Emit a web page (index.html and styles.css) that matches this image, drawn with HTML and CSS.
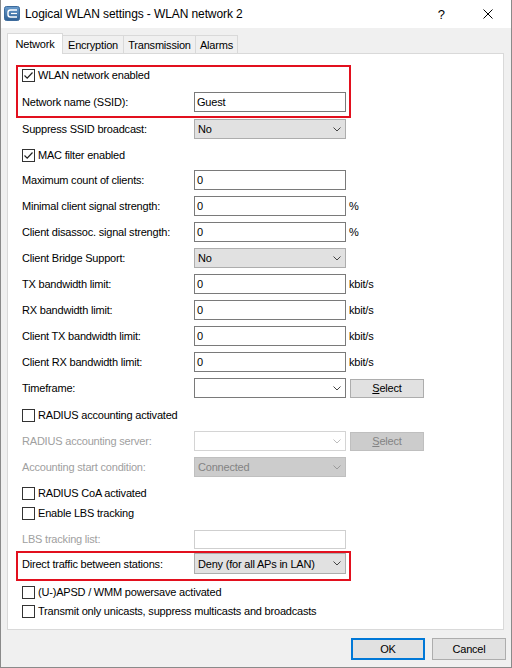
FILE: index.html
```html
<!DOCTYPE html>
<html>
<head>
<meta charset="utf-8">
<title>Logical WLAN settings</title>
<link rel="stylesheet" href="styles.css">
</head>
<body>
<div class="window">
  <div class="titlebar">
    <svg class="appicon" width="16" height="15" viewBox="0 0 16 15">
      <defs>
        <linearGradient id="ig" x1="0" y1="0" x2="0" y2="1">
          <stop offset="0" stop-color="#6a9ccd"/>
          <stop offset="1" stop-color="#2e5f93"/>
        </linearGradient>
      </defs>
      <rect x="0.5" y="0.5" width="15" height="14" rx="2" fill="url(#ig)" stroke="#3d6b9c"/>
      <path d="M13 4H6.5A2.5 2.5 0 0 0 4 6.5v2A2.5 2.5 0 0 0 6.5 11H13" fill="none" stroke="#fff" stroke-width="1.4"/>
      <path d="M13 7.5H7" fill="none" stroke="#fff" stroke-width="1.2"/>
    </svg>
    <span class="title">Logical WLAN settings - WLAN network 2</span>
    <span class="help">?</span>
    <svg class="close" width="10" height="10" viewBox="0 0 10 10"><path d="M0.5 0.5L9.5 9.5M9.5 0.5L0.5 9.5" stroke="#000" stroke-width="1"/></svg>
  </div>
  <div class="client">
    <div class="tabs">
      <div class="tab active">Network</div>
      <div class="tab t-enc">Encryption</div>
      <div class="tab t-trans">Transmission</div>
      <div class="tab t-alarms">Alarms</div>
    </div>
    <div class="panel">
      <div class="hl hl1">
        <div class="row cbrow m2"><span class="cb"><svg width="11" height="11" viewBox="0 0 11 11"><path d="M1.5 5.5L4.2 8.2L9.5 2.5" fill="none" stroke="#222" stroke-width="1.2"/></svg></span><span class="txt">WLAN network enabled</span></div>
        <div class="row m10"><span class="lbl">Network name (SSID):</span><div class="edit">Guest</div></div>
      </div>

      <div class="row m1 ind"><span class="lbl">Suppress SSID broadcast:</span><div class="combo">No<svg class="chev" width="8" height="5" viewBox="0 0 8 5"><path d="M0.5 0.5L4 4L7.5 0.5" fill="none" stroke="#444"/></svg></div></div>
      <div class="row cbrow m10 ind"><span class="cb"><svg width="11" height="11" viewBox="0 0 11 11"><path d="M1.5 5.5L4.2 8.2L9.5 2.5" fill="none" stroke="#222" stroke-width="1.2"/></svg></span><span class="txt">MAC filter enabled</span></div>
      <div class="row m8 ind"><span class="lbl">Maximum count of clients:</span><div class="edit">0</div></div>
      <div class="row m6 ind"><span class="lbl">Minimal client signal strength:</span><div class="edit">0</div><span class="unit">%</span></div>
      <div class="row m6 ind"><span class="lbl">Client disassoc. signal strength:</span><div class="edit">0</div><span class="unit">%</span></div>
      <div class="row m6 ind"><span class="lbl">Client Bridge Support:</span><div class="combo">No<svg class="chev" width="8" height="5" viewBox="0 0 8 5"><path d="M0.5 0.5L4 4L7.5 0.5" fill="none" stroke="#444"/></svg></div></div>
      <div class="row m6 ind"><span class="lbl">TX bandwidth limit:</span><div class="edit">0</div><span class="unit">kbit/s</span></div>
      <div class="row m6 ind"><span class="lbl">RX bandwidth limit:</span><div class="edit">0</div><span class="unit">kbit/s</span></div>
      <div class="row m6 ind"><span class="lbl">Client TX bandwidth limit:</span><div class="edit">0</div><span class="unit">kbit/s</span></div>
      <div class="row m6 ind"><span class="lbl">Client RX bandwidth limit:</span><div class="edit">0</div><span class="unit">kbit/s</span></div>
      <div class="row m6 ind"><span class="lbl">Timeframe:</span><div class="combo editable"><span></span><svg class="chev" width="8" height="5" viewBox="0 0 8 5"><path d="M0.5 0.5L4 4L7.5 0.5" fill="none" stroke="#444"/></svg></div><span class="sbtn"><u>S</u>elect</span></div>
      <div class="row cbrow m11 ind"><span class="cb"></span><span class="txt">RADIUS accounting activated</span></div>
      <div class="row m9 ind dis"><span class="lbl">RADIUS accounting server:</span><div class="combo dis-edit"><span></span><svg class="chev" width="8" height="5" viewBox="0 0 8 5"><path d="M0.5 0.5L4 4L7.5 0.5" fill="none" stroke="#bdbdbd"/></svg></div><span class="sbtn disabled"><u>S</u>elect</span></div>
      <div class="row m6 ind dis"><span class="lbl">Accounting start condition:</span><div class="combo disabled">Connected<svg class="chev" width="8" height="5" viewBox="0 0 8 5"><path d="M0.5 0.5L4 4L7.5 0.5" fill="none" stroke="#9a9a9a"/></svg></div></div>
      <div class="row cbrow m10 ind"><span class="cb"></span><span class="txt">RADIUS CoA activated</span></div>
      <div class="row cbrow m7 ind"><span class="cb"></span><span class="txt">Enable LBS tracking</span></div>
      <div class="row m9 ind dis"><span class="lbl">LBS tracking list:</span><div class="edit disabled"></div></div>

      <div class="hl hl2">
        <div class="row r21"><span class="lbl">Direct traffic between stations:</span><div class="combo tall">Deny (for all APs in LAN)<svg class="chev" width="8" height="5" viewBox="0 0 8 5"><path d="M0.5 0.5L4 4L7.5 0.5" fill="none" stroke="#444"/></svg></div></div>
      </div>

      <div class="row cbrow m5 ind"><span class="cb"></span><span class="txt">(U-)APSD / WMM powersave activated</span></div>
      <div class="row cbrow m6 ind"><span class="cb"></span><span class="txt">Transmit only unicasts, suppress multicasts and broadcasts</span></div>
    </div>
    <div class="buttons">
      <span class="btn default">OK</span>
      <span class="btn">Cancel</span>
    </div>
  </div>
</div>
</body>
</html>
```
FILE: styles.css
```css
html, body {
  margin: 0;
  padding: 0;
  background: #ffffff;
}

.window {
  width: 512px;
  height: 668px;
  box-sizing: border-box;
  border: 1px solid #8a8a8a;
  border-top: 0;
  display: flex;
  flex-direction: column;
  font-family: "Liberation Sans", Arial, sans-serif;
  font-size: 11px;
  letter-spacing: -0.2px;
  color: #000;
}

.titlebar {
  height: 28px;
  flex: 0 0 28px;
  background: #fff;
  display: flex;
  align-items: center;
}

.appicon {
  margin-left: 3px;
  margin-top: -1px;
}

.title {
  margin-left: 5px;
  font-size: 12px;
  letter-spacing: -0.1px;
  color: #000;
}

.help {
  margin-left: auto;
  margin-right: 38px;
  font-size: 13px;
  letter-spacing: 0;
}

.close {
  margin-right: 18px;
}

.client {
  flex: 1;
  background: #f0f0f0;
  padding: 5px 5px 0 6px;
  display: flex;
  flex-direction: column;
}

.tabs {
  display: flex;
  align-items: flex-end;
  height: 20px;
}

.tab {
  height: 18px;
  box-sizing: border-box;
  border: 1px solid #d9d9d9;
  border-bottom: 0;
  background: #f0f0f0;
  display: flex;
  align-items: center;
  justify-content: center;
  margin-left: -1px;
  padding-top: 1px;
}

.tab.active {
  height: 21px;
  margin-bottom: -1px;
  margin-left: 0;
  width: 56px;
  background: #fff;
  position: relative;
  z-index: 1;
  padding-top: 0;
  padding-bottom: 1px;
}

.t-enc { width: 62px; }
.t-trans { width: 73px; }
.t-alarms { width: 43px; }

.panel {
  width: 497px;
  height: 577px;
  box-sizing: border-box;
  border: 1px solid #d9d9d9;
  background: #fff;
  display: flex;
  flex-direction: column;
}

.row {
  display: flex;
  align-items: center;
  height: 20px;
  flex: 0 0 auto;
}

.row.ind {
  padding-left: 14px;
}

.cbrow {
  height: 13px;
}

.r21 {
  height: 21px;
}

.m1 { margin-top: 1px; }
.m2 { margin-top: 2px; }
.m5 { margin-top: 5px; }
.m6 { margin-top: 6px; }
.m7 { margin-top: 7px; }
.m8 { margin-top: 8px; }
.m9 { margin-top: 9px; }
.m10 { margin-top: 10px; }
.m11 { margin-top: 11px; }

.hl {
  margin-left: 8px;
  width: 335px;
  box-sizing: border-box;
  border: 2px solid #e2101e;
  padding: 0 3px 0 4px;
  display: flex;
  flex-direction: column;
}

.hl1 {
  margin-top: 11px;
  height: 53px;
  padding-bottom: 4px;
}

.hl2 {
  margin-top: 2px;
  height: 30px;
  padding-bottom: 5px;
}

.lbl {
  width: 172px;
  flex: 0 0 172px;
  white-space: nowrap;
}

.dis .lbl {
  color: #a0a0a0;
}

.cb {
  width: 13px;
  height: 13px;
  flex: 0 0 13px;
  box-sizing: border-box;
  border: 1px solid #333;
  background: #fff;
  display: flex;
  align-items: center;
  justify-content: center;
  margin-right: 3px;
}

.txt {
  white-space: nowrap;
  line-height: 13px;
}

.edit {
  width: 152px;
  height: 20px;
  flex: 0 0 152px;
  box-sizing: border-box;
  border: 1px solid #7a7a7a;
  background: #fff;
  padding-left: 2px;
  line-height: 18px;
}

.edit.disabled {
  border-color: #cfcfcf;
  height: 19px;
}

.combo {
  width: 152px;
  height: 20px;
  flex: 0 0 152px;
  box-sizing: border-box;
  border: 1px solid #adadad;
  background: #e1e1e1;
  display: flex;
  align-items: center;
  justify-content: space-between;
  padding: 0 4px 0 3px;
  white-space: nowrap;
}

.combo.tall {
  height: 21px;
}

.combo.editable {
  background: #fff;
  border-color: #7a7a7a;
}

.combo.dis-edit {
  background: #fff;
  border-color: #d4d4d4;
}

.combo.disabled {
  background: #cccccc;
  border-color: #bfbfbf;
  color: #838383;
}

.chev {
  flex: 0 0 8px;
}

.unit {
  margin-left: 3px;
  white-space: nowrap;
}

.sbtn {
  margin-left: 4px;
  width: 74px;
  height: 19px;
  box-sizing: border-box;
  border: 1px solid #adadad;
  background: #e1e1e1;
  display: flex;
  align-items: center;
  justify-content: center;
}

.sbtn.disabled {
  background: #cccccc;
  border-color: #bfbfbf;
  color: #838383;
}

.buttons {
  display: flex;
  justify-content: flex-end;
  gap: 7px;
  margin-top: 8px;
}

.btn {
  width: 74px;
  height: 22px;
  box-sizing: border-box;
  border: 1px solid #adadad;
  background: #e1e1e1;
  display: flex;
  align-items: center;
  justify-content: center;
  font-size: 11px;
}

.btn.default {
  border: 1px solid #0078d7;
  box-shadow: inset 0 0 0 1px #0078d7;
}
```
